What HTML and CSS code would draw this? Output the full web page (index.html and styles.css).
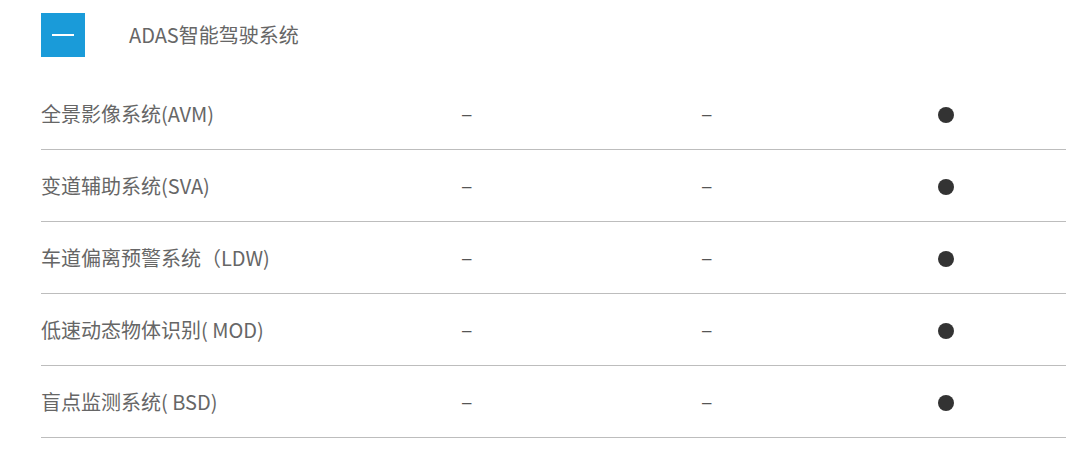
FILE: index.html
```html
<!DOCTYPE html>
<html lang="zh-CN">
<head>
<meta charset="utf-8">
<link rel="stylesheet" href="styles.css">
</head>
<body>
<div class="page">
  <div class="section-head">
    <div class="toggle"><span class="toggle-bar"></span></div>
    <div class="section-title">ADAS智能驾驶系统</div>
  </div>
  <div class="table">
    <div class="row">
      <div class="cell label">全景影像系统(AVM)</div>
      <div class="cell"><span class="dash">–</span></div>
      <div class="cell"><span class="dash">–</span></div>
      <div class="cell"><span class="dot"></span></div>
    </div>
    <div class="row">
      <div class="cell label">变道辅助系统(SVA)</div>
      <div class="cell"><span class="dash">–</span></div>
      <div class="cell"><span class="dash">–</span></div>
      <div class="cell"><span class="dot"></span></div>
    </div>
    <div class="row">
      <div class="cell label">车道偏离预警系统（LDW)</div>
      <div class="cell"><span class="dash">–</span></div>
      <div class="cell"><span class="dash">–</span></div>
      <div class="cell"><span class="dot"></span></div>
    </div>
    <div class="row">
      <div class="cell label">低速动态物体识别( MOD)</div>
      <div class="cell"><span class="dash">–</span></div>
      <div class="cell"><span class="dash">–</span></div>
      <div class="cell"><span class="dot"></span></div>
    </div>
    <div class="row">
      <div class="cell label">盲点监测系统( BSD)</div>
      <div class="cell"><span class="dash">–</span></div>
      <div class="cell"><span class="dash">–</span></div>
      <div class="cell"><span class="dot"></span></div>
    </div>
  </div>
</div>
</body>
</html>
```

FILE: styles.css
```css
html, body {
  margin: 0;
  padding: 0;
  background: #ffffff;
}

body {
  font-family: "Noto Sans CJK SC", "Noto Sans", sans-serif;
  color: #666666;
}

.page {
  width: 1025px;
  padding: 13px 0 0 41px;
}

.section-head {
  display: flex;
  align-items: center;
  gap: 44px;
  height: 44px;
  margin-bottom: 21px;
}

.toggle {
  width: 44px;
  height: 44px;
  background: #1a9bd9;
  display: flex;
  align-items: center;
  justify-content: center;
}

.toggle-bar {
  display: block;
  width: 22px;
  height: 2px;
  background: #ffffff;
}

.section-title {
  font-size: 20px;
  color: #666666;
  line-height: 1;
}

.table {
  display: flex;
  flex-direction: column;
}

.row {
  display: grid;
  grid-template-columns: 421px 240px 236px 1fr;
  align-items: center;
  height: 71px;
  border-bottom: 1px solid #bdbdbd;
}

.cell {
  display: flex;
  align-items: center;
}

.label {
  font-size: 20px;
  color: #666666;
  line-height: 1;
}

.dash {
  font-family: "Liberation Sans", sans-serif;
  font-size: 17px;
  color: #555555;
  line-height: 1;
  padding-top: 2px;
}

.dot {
  display: block;
  width: 16px;
  height: 16px;
  margin-top: 2px;
  border-radius: 50%;
  background: #333333;
}
```
